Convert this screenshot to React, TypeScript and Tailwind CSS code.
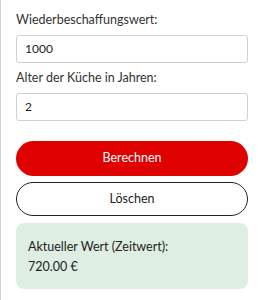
import React from "react";

export default function App() {
  return (
    <div
      className="w-[263px] h-[300px] bg-white border-l border-[#d4d4d4] px-[15px] pt-[10px] text-[#222]"
      style={{ fontFamily: "Lato, 'Noto Sans', sans-serif" }}
    >
      <label className="block text-[12.5px] leading-[20px] mb-[5px] text-[#333]">Wiederbeschaffungswert:</label>
      <div className="h-[28px] border border-[#d0d0d0] rounded-[3px] flex items-center px-[8px] text-[12px]">1000</div>
      <label className="block text-[12.5px] leading-[20px] mt-[5px] mb-[5px] text-[#333]">Alter der Küche in Jahren:</label>
      <div className="h-[28px] border border-[#d0d0d0] rounded-[3px] flex items-center px-[8px] text-[12px]">2</div>
      <button className="mt-[20px] w-full h-[35px] rounded-full bg-[#df0000] text-white text-[12.5px] flex items-center justify-center">
        Berechnen
      </button>
      <button className="mt-[6px] w-full h-[34px] rounded-full border border-[#222] bg-white text-[12.5px] text-[#222] flex items-center justify-center">
        Löschen
      </button>
      <div className="mt-[7px] h-[66px] rounded-[8px] bg-[#dfeee3] px-[12px] pt-[14px] text-[12.5px] text-[#222]">
        <div className="leading-[20px]">Aktueller Wert (Zeitwert):</div>
        <div className="leading-[20px]">720.00 €</div>
      </div>
    </div>
  );
}
